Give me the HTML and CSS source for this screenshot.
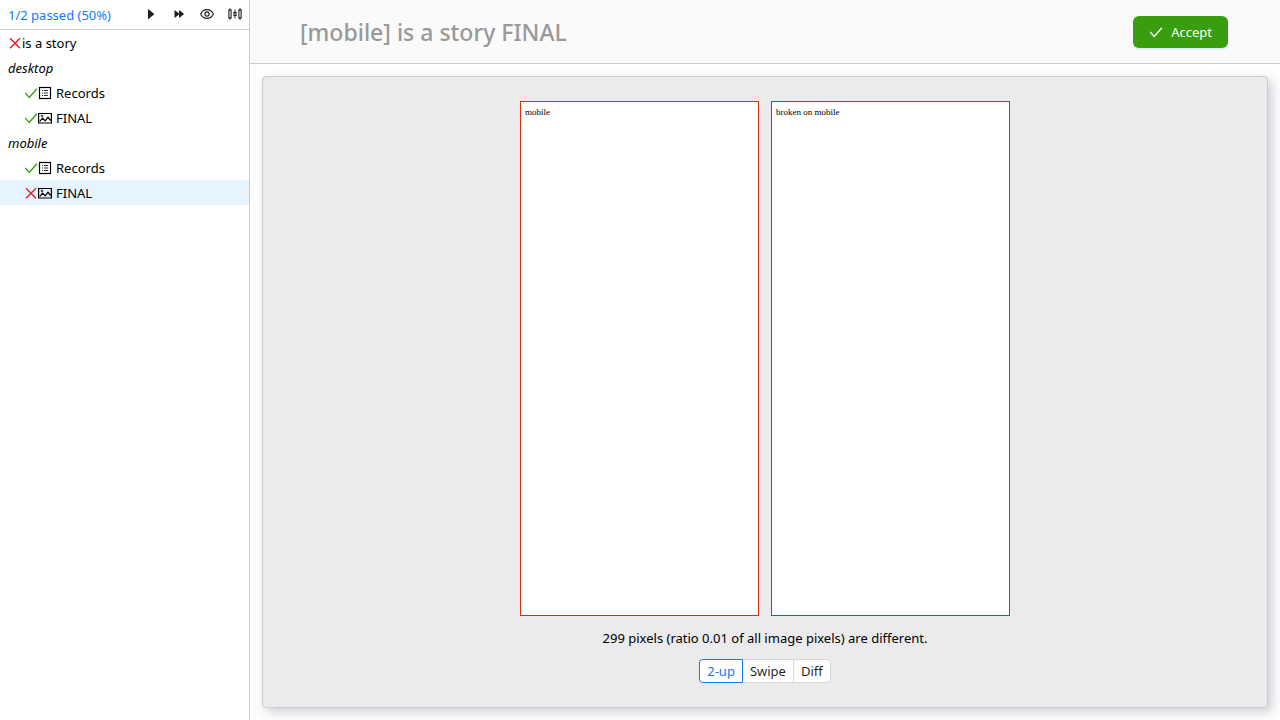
FILE: index.html
```html
<!DOCTYPE html>
<html lang="en">
<head>
<meta charset="utf-8">
<meta name="viewport" content="width=device-width, initial-scale=1">
<title>[mobile] is a story FINAL</title>
<link rel="stylesheet" href="styles.css">
</head>
<body>
<svg class="sprite" aria-hidden="true">
  <symbol id="check" viewBox="0 0 14 14"><path fill="none" stroke="currentColor" stroke-width="1.3" d="M1.200 6.800l4 4.700L12.900 2.700"/></symbol>
  <symbol id="cross" viewBox="0 0 14 14"><path fill="none" stroke="currentColor" stroke-width="1.5" d="M2 2.200l10 10M12 2.200l-10 10"/></symbol>
  <symbol id="records" viewBox="0 0 14 14"><rect x="1.500" y="1.500" width="11" height="11" fill="none" stroke="currentColor" stroke-width="1.200"/><path fill="none" stroke="currentColor" stroke-width=".8" d="M4 4.500h1.200M6 4.500h4M4 7h1.200M6 7h4M4 9.500h1.200M6 9.500h4"/></symbol>
  <symbol id="picture" viewBox="0 0 14 14"><path fill="none" stroke="currentColor" stroke-width="1.200" d="M.6 2.500h12.800v9.500H.6zM1.800 10.400l2.800-3.300 2.500 2.800 2.900-3.600 2.600 3.200"/><circle cx="4" cy="4.900" r=".9" fill="none" stroke="currentColor" stroke-width=".8"/></symbol>
  <symbol id="play" viewBox="0 0 14 14"><path fill="currentColor" d="M4 2.500v9.400q0 .5.5.2l5.400-4.500q.3-.4 0-.8L4.500 2.300Q4 2 4 2.500z"/></symbol>
  <symbol id="forward" viewBox="0 0 14 14"><path fill="currentColor" d="M2.500 3.500v7q0 .4.400.2L7 7.500v3q0 .4.400.2l4.200-3.300q.4-.4 0-.8L7.400 3.300Q7 3.100 7 3.500v3L2.900 3.300q-.4-.2-.4.2z"/></symbol>
  <symbol id="eye" viewBox="0 0 14 14"><g fill="none" stroke="currentColor" stroke-width="1.100"><path d="M.6 7C2 4.100 4.200 2.600 7 2.600S12 4.100 13.400 7C12 9.900 9.800 11.400 7 11.400S2 9.900.6 7z"/><circle cx="7" cy="7" r="2.100"/></g></symbol>
  <symbol id="sliders" viewBox="0 0 14 14"><g fill="none" stroke="currentColor"><path stroke-width="1" d="M2 1.200v2M2 10.500v2.300M7 2.500v3M7 8.500v3M12 1.200v2M12 10.500v2.300"/><rect x=".9" y="3" width="2.200" height="8" stroke-width="1.100"/><rect x="6" y="5.500" width="2" height="3" stroke-width="1.100"/><rect x="10.900" y="3" width="2.200" height="8" stroke-width="1.100"/></g></symbol>
</svg>
<div class="app">
  <aside class="sidebar">
    <div class="toolbar">
      <a class="summary" href="#results">1/2 passed (50%)</a>
      <div class="tools">
        <button type="button" aria-label="Run"><svg class="icon"><use href="#play"/></svg></button>
        <button type="button" aria-label="Run all"><svg class="icon"><use href="#forward"/></svg></button>
        <button type="button" aria-label="Show"><svg class="icon"><use href="#eye"/></svg></button>
        <button type="button" aria-label="Settings"><svg class="icon"><use href="#sliders"/></svg></button>
      </div>
    </div>
    <ul class="tree" id="results">
      <li class="row"><svg class="icon fail"><use href="#cross"/></svg><span>is a story</span></li>
      <li class="row device">desktop</li>
      <li class="row child"><svg class="icon pass"><use href="#check"/></svg><svg class="icon"><use href="#records"/></svg><span class="name">Records</span></li>
      <li class="row child"><svg class="icon pass"><use href="#check"/></svg><svg class="icon"><use href="#picture"/></svg><span class="name">FINAL</span></li>
      <li class="row device">mobile</li>
      <li class="row child"><svg class="icon pass"><use href="#check"/></svg><svg class="icon"><use href="#records"/></svg><span class="name">Records</span></li>
      <li class="row child selected"><svg class="icon fail"><use href="#cross"/></svg><svg class="icon"><use href="#picture"/></svg><span class="name">FINAL</span></li>
    </ul>
  </aside>
  <div class="page">
    <header class="header">
      <h1>[mobile] is a story FINAL</h1>
      <button class="accept" type="button"><svg class="icon"><use href="#check"/></svg>Accept</button>
    </header>
    <main class="card">
      <div class="shots">
        <div class="shot expected">mobile</div>
        <div class="shot actual">broken on mobile</div>
      </div>
      <p class="message">299 pixels (ratio 0.01 of all image pixels) are different.</p>
      <div class="modes" role="radiogroup" aria-label="View mode">
        <label><input type="radio" name="mode" checked>2-up</label>
        <label><input type="radio" name="mode">Swipe</label>
        <label><input type="radio" name="mode">Diff</label>
      </div>
    </main>
  </div>
</div>
</body>
</html>
```
FILE: styles.css
```css
* { box-sizing: border-box; }
body {
  margin: 0;
  font: 13px/22px "Segoe UI", "Noto Sans", "Open Sans", sans-serif;
  color: #000;
  background: #fff;
}
button { font: inherit; cursor: pointer; }
.sprite { display: none; }
.icon { width: 14px; height: 14px; flex: none; display: block; }
.app { display: flex; min-height: 100vh; }

.sidebar { width: 250px; flex: none; border-right: 1px solid #ccc; }
.toolbar {
  display: flex;
  align-items: center;
  justify-content: space-between;
  height: 30px;
  padding-left: 8px;
  border-bottom: 1px solid #ccc;
}
.summary { color: #1677ff; text-decoration: none; }
.tools { display: flex; }
.tools button {
  width: 28px;
  height: 28px;
  padding: 6px 7px 8px;
  border: 0;
  background: none;
  color: rgba(0, 0, 0, 0.88);
}
.tree { list-style: none; margin: 0; padding: 0; }
.row { display: flex; align-items: center; height: 25px; padding-left: 8px; }
.device { font-style: italic; }
.child { padding-left: 24px; }
.name { margin-left: 4px; }
.selected { background: #e6f4ff; }
.pass { color: #389e0d; }
.fail { color: #e8202e; }

.page { flex: 1; min-width: 0; display: flex; flex-direction: column; }
.header {
  display: flex;
  align-items: flex-start;
  justify-content: space-between;
  min-height: 64px;
  padding: 16px 52px 15px 50px;
  border-bottom: 1px solid #ccc;
  background: #fafafa;
}
.header h1 {
  margin: 0;
  font-size: 23px;
  line-height: 32px;
  font-weight: 500;
  color: #999;
}
.accept {
  display: flex;
  align-items: center;
  gap: 8px;
  height: 32px;
  padding: 0 16px;
  border: 0;
  border-radius: 6px;
  background: #389e0d;
  color: #fff;
  box-shadow: 0 2px 0 rgba(5, 145, 255, 0.1);
}
.card {
  flex: 1;
  display: flex;
  flex-direction: column;
  align-items: center;
  margin: 12px;
  padding: 24px;
  border: 1px solid #ccc;
  border-radius: 4px;
  background: #ebebed;
  box-shadow: 4px 4px 12px rgba(38, 57, 77, 0.25);
}
.shots { flex: 1; display: flex; gap: 12px; }
.shot {
  width: 239px;
  min-height: 515px;
  padding: 4px;
  border: 1px solid;
  background: #fff;
  font: 9px/12px "Liberation Serif", serif;
}
.expected { border-color: #de2c0e; }
.actual { border-color: #18804b; }
.message { margin: 11px 0 10px; }
.modes { display: flex; }
.modes label {
  height: 24px;
  padding: 0 7px;
  border: 1px solid #d9d9d9;
  margin-left: -1px;
  background: #fff;
  color: rgba(0, 0, 0, 0.88);
  cursor: pointer;
}
.modes label:first-child { margin-left: 0; border-radius: 4px 0 0 4px; }
.modes label:last-child { border-radius: 0 4px 4px 0; }
.modes label:has(:checked) { position: relative; z-index: 1; color: #1677ff; border-color: #1677ff; }
.modes input { position: absolute; opacity: 0; width: 0; height: 0; margin: 0; }
```
